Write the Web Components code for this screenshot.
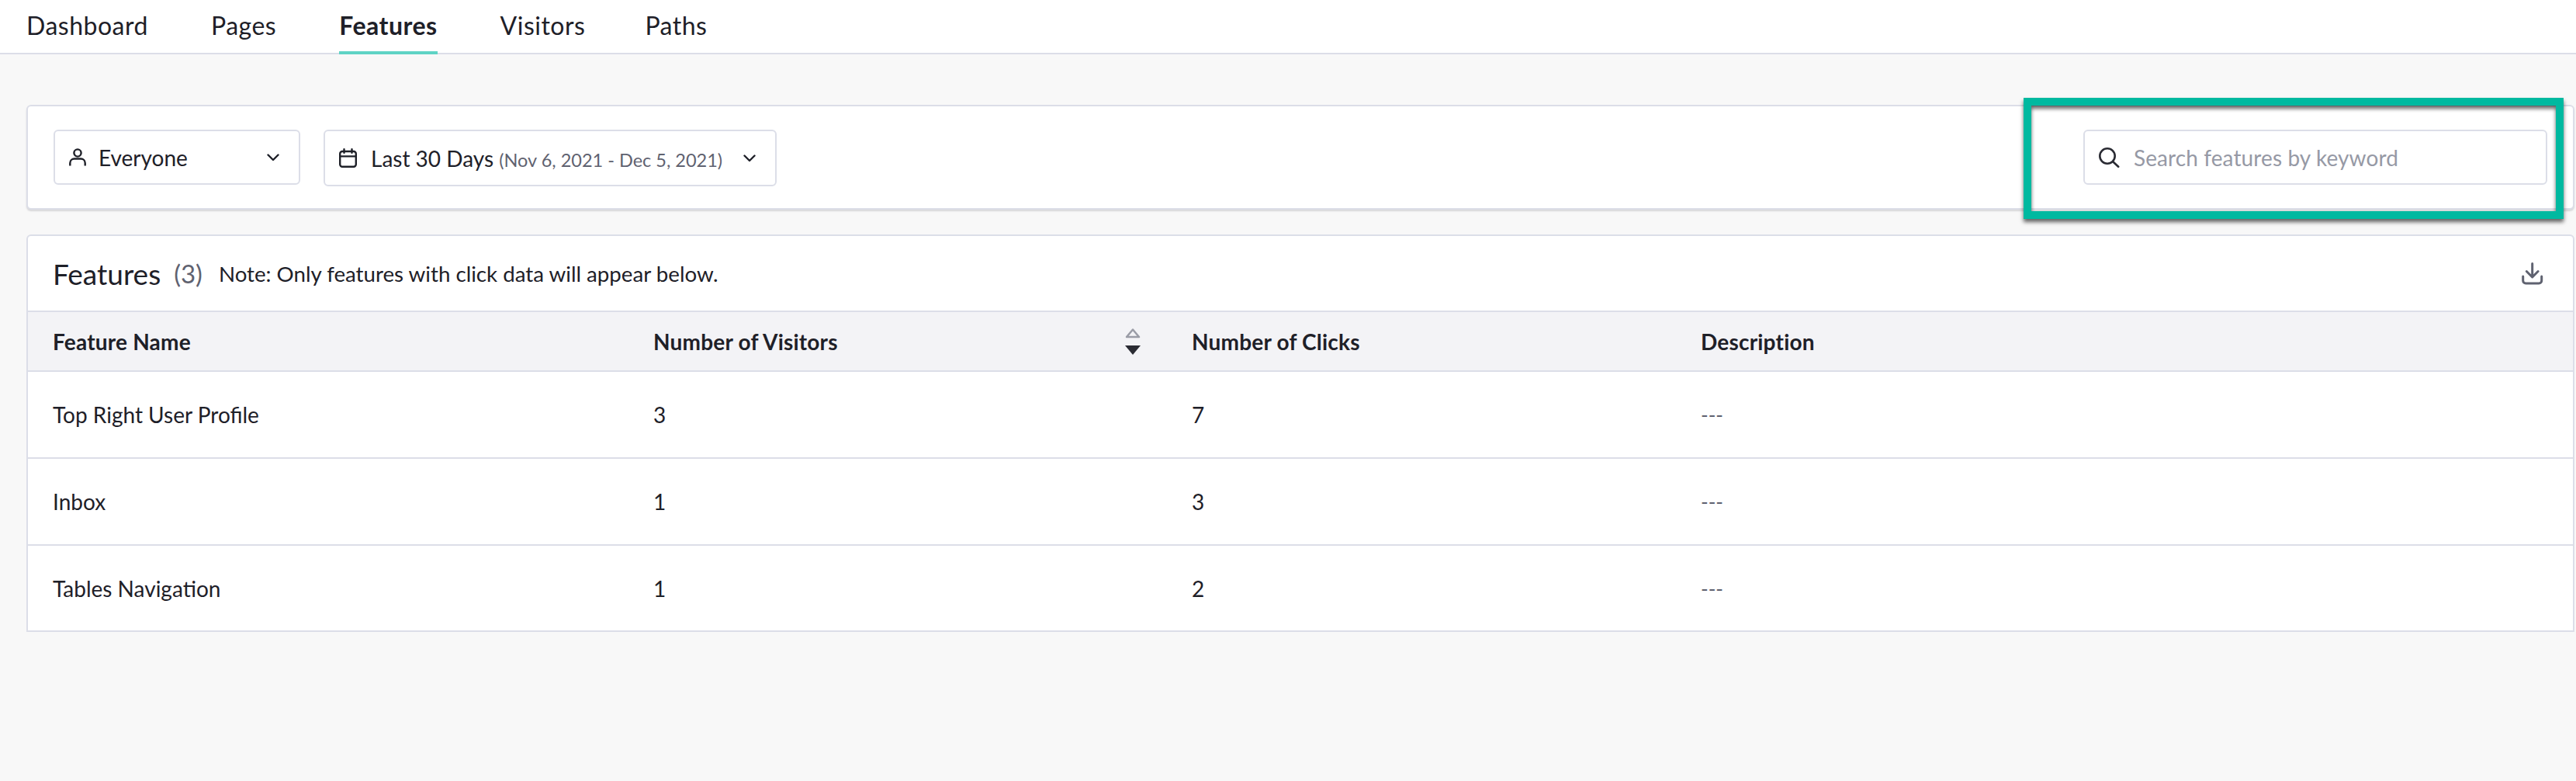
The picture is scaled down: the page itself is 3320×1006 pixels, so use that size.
<!DOCTYPE html>
<html>
<head>
<meta charset="utf-8">
<title>Features</title>
<style>
  html, body { margin: 0; height: 100%; background: #f8f8f8; }
  body { font-family: "Lato", "Liberation Sans", sans-serif; color: #1e2028; }
</style>
</head>
<body>
<app-tabs>
  <tab-link>Dashboard</tab-link>
  <tab-link>Pages</tab-link>
  <tab-link active>Features</tab-link>
  <tab-link>Visitors</tab-link>
  <tab-link>Paths</tab-link>
</app-tabs>
<page-main>
  <filter-bar>
    <filter-select icon="user" width="318">Everyone</filter-select>
    <filter-select icon="calendar" width="584" tall>Last 30 Days <small>(Nov 6, 2021 - Dec 5, 2021)</small></filter-select>
    <search-box slot="right" placeholder="Search features by keyword"></search-box>
  </filter-bar>
  <features-table>
    <span slot="title">Features</span>
    <span slot="count">(3)</span>
    <span slot="note">Note: Only features with click data will appear below.</span>
    <table-row head>
      <span>Feature Name</span>
      <span>Number of Visitors</span>
      <span>Number of Clicks</span>
      <span>Description</span>
    </table-row>
    <table-row>
      <span>Top Right User Profile</span>
      <span>3</span>
      <span>7</span>
      <span class="muted">---</span>
    </table-row>
    <table-row>
      <span>Inbox</span>
      <span>1</span>
      <span>3</span>
      <span class="muted">---</span>
    </table-row>
    <table-row>
      <span>Tables Navigation</span>
      <span>1</span>
      <span>2</span>
      <span class="muted">---</span>
    </table-row>
  </features-table>
</page-main>

<script>
(function initFeaturesPage() {
  const ICONS = {
    user: `<svg width="22" height="23" viewBox="0 0 22 23" fill="none" stroke="#1e2028" stroke-width="2.4"><circle cx="11" cy="6" r="4.600"/><path d="M1.300 22.500V19c0-3.300 2.500-5.500 5.500-5.500h8.400c3 0 5.500 2.200 5.500 5.500v3.500"/></svg>`,
    calendar: `<svg width="23" height="25" viewBox="0 0 23 25" fill="none" stroke="#1e2028" stroke-width="2.4" stroke-linecap="round"><rect x="1.200" y="4" width="20.600" height="19.800" rx="3"/><path d="M1.200 10.400h20.600M6.500 1.200v4.500M16.500 1.200v4.500"/></svg>`,
    chevron: `<svg width="16" height="10" viewBox="0 0 16 10" fill="none" stroke="#1e2028" stroke-width="2.4" stroke-linecap="round" stroke-linejoin="round"><path d="M1.500 1.500L8 8l6.500-6.500"/></svg>`,
    search: `<svg width="27" height="26" viewBox="0 0 27 26" fill="none" stroke="#2a2b33" stroke-width="2.600" stroke-linecap="round"><circle cx="11" cy="11" r="9.700"/><path d="M18.200 18.200l7 6.500"/></svg>`,
    download: `<svg width="28" height="29" viewBox="0 0 28 29" fill="none" stroke="#5f6270" stroke-width="3" stroke-linecap="round" stroke-linejoin="round"><path d="M13.700 1.500V18.500M6.300 11.500l7.400 7.500 7.400-7.500"/><path d="M1.700 18v5.500c0 2 1.500 3.500 3.500 3.500h17c2 0 3.500-1.500 3.500-3.500V18"/></svg>`,
  };

  class AppTabs extends HTMLElement {
    constructor() {
      super();
      this.attachShadow({ mode: "open" });
      this.shadowRoot.innerHTML = `
        <style>
          :host {
            display: flex;
            gap: 81px;
            height: 68px;
            padding-left: 34px;
            background-color: #fff;
            border-bottom: 2px solid #dcdee8;
          }
        </style>
        <slot></slot>
      `;
    }
  }

  class TabLink extends HTMLElement {
    constructor() {
      super();
      this.attachShadow({ mode: "open" });
      this.shadowRoot.innerHTML = `
        <style>
          :host {
            display: block;
            position: relative;
            height: 68px;
            line-height: 66px;
            font-size: 32px;
            letter-spacing: 0.5px;
            color: #1e2028;
          }
          :host(:last-child) {
            margin-left: -4px;
          }
          :host([active]) {
            font-weight: 700;
          }
          :host([active])::after {
            content: "";
            position: absolute;
            left: 0;
            right: 0;
            bottom: -2px;
            height: 4px;
            background-color: #5fd3c5;
          }
        </style>
        <slot></slot>
      `;
    }
  }

  class PageMain extends HTMLElement {
    constructor() {
      super();
      this.attachShadow({ mode: "open" });
      this.shadowRoot.innerHTML = `
        <style>
          :host {
            display: flex;
            flex-direction: column;
            gap: 32px;
            padding: 65px 2px 0 34px;
          }
        </style>
        <slot></slot>
      `;
    }
  }

  class FilterBar extends HTMLElement {
    constructor() {
      super();
      this.attachShadow({ mode: "open" });
      this.shadowRoot.innerHTML = `
        <style>
          :host {
            display: flex;
            align-items: flex-start;
            justify-content: space-between;
            position: relative;
            box-sizing: border-box;
            height: 135px;
            padding: 30px 33px 0 33px;
            background-color: #fff;
            border: 2px solid #dcdee8;
            border-radius: 6px;
            box-shadow: 0 2px 2px rgba(60, 60, 70, 0.18);
          }
          .left {
            display: flex;
            gap: 30px;
          }
          .callout {
            position: absolute;
            top: -11px;
            right: 12px;
            width: 696px;
            height: 156px;
            box-sizing: border-box;
            border: 10px solid #00b9a0;
            box-shadow: 0 4px 5px rgba(0, 0, 0, 0.6), inset 0 4px 5px rgba(0, 0, 0, 0.6);
            pointer-events: none;
          }
        </style>
        <div class="left"><slot></slot></div>
        <slot name="right"></slot>
        <div class="callout"></div>
      `;
    }
  }

  class FilterSelect extends HTMLElement {
    constructor() {
      super();
      this.attachShadow({ mode: "open" });
      const isCalendar = this.getAttribute("icon") === "calendar";
      this.shadowRoot.innerHTML = `
        <style>
          :host {
            display: flex;
            align-items: center;
            box-sizing: border-box;
            width: ${this.getAttribute("width")}px;
            height: ${this.hasAttribute("tall") ? 73 : 71}px;
            padding: 0 25px 0 18px;
            background-color: #fff;
            border: 2px solid #dcdee8;
            border-radius: 6px;
            font-size: 28px;
            white-space: nowrap;
          }
          .icon {
            display: flex;
            margin-right: ${isCalendar ? 18 : 16}px;
          }
          .label {
            flex: 1;
          }
          ::slotted(small) {
            font-size: 23.5px;
            color: #5f6270;
          }
          .chevron {
            display: flex;
          }
        </style>
        <span class="icon">${ICONS[this.getAttribute("icon")]}</span>
        <span class="label"><slot></slot></span>
        <span class="chevron">${ICONS.chevron}</span>
      `;
    }
  }

  class SearchBox extends HTMLElement {
    constructor() {
      super();
      this.attachShadow({ mode: "open" });
      this.shadowRoot.innerHTML = `
        <style>
          :host {
            display: flex;
            align-items: center;
            gap: 18px;
            box-sizing: border-box;
            width: 598px;
            height: 71px;
            padding-left: 18px;
            background-color: #fff;
            border: 2px solid #dcdee8;
            border-radius: 6px;
            font-size: 28px;
            letter-spacing: 0.1px;
            color: #9699a5;
          }
          .icon {
            display: flex;
          }
        </style>
        <span class="icon">${ICONS.search}</span>
        <span>${this.getAttribute("placeholder")}</span>
      `;
    }
  }

  class FeaturesTable extends HTMLElement {
    constructor() {
      super();
      this.attachShadow({ mode: "open" });
      this.shadowRoot.innerHTML = `
        <style>
          :host {
            display: block;
            background-color: #fff;
            border: 2px solid #dcdee8;
            border-radius: 6px 6px 0 0;
          }
          .title-row {
            display: flex;
            align-items: center;
            height: 96px;
            padding: 0 38px 0 32px;
          }
          .title {
            font-size: 37px;
            margin-right: 17px;
          }
          .count {
            font-size: 33px;
            color: #5f6270;
            margin-right: 21px;
          }
          .note {
            flex: 1;
            font-size: 27.7px;
          }
          .download {
            display: flex;
          }
        </style>
        <div class="title-row">
          <span class="title"><slot name="title"></slot></span>
          <span class="count"><slot name="count"></slot></span>
          <span class="note"><slot name="note"></slot></span>
          <span class="download">${ICONS.download}</span>
        </div>
        <slot></slot>
      `;
    }
  }

  class TableRow extends HTMLElement {
    constructor() {
      super();
      this.attachShadow({ mode: "open" });
      this.shadowRoot.innerHTML = `
        <style>
          :host {
            display: grid;
            grid-template-columns: 774px 694px 656px 1fr;
            align-items: center;
            position: relative;
            box-sizing: border-box;
            height: 112px;
            padding-left: 32px;
            border-top: 2px solid #dcdee8;
            font-size: 28px;
            color: #1e2028;
          }
          :host(:last-child) {
            height: 111px;
          }
          :host([head]) {
            height: 77px;
            background-color: #f3f3f6;
            font-weight: 700;
            letter-spacing: 0.2px;
          }
          ::slotted(.muted) {
            font-size: 26px;
            color: #5f6270;
          }
          .sort {
            display: none;
            position: absolute;
            left: 1414px;
            top: 21px;
          }
          :host([head]) .sort {
            display: block;
          }
        </style>
        <slot></slot>
        <svg class="sort" width="20" height="34" viewBox="0 0 20 34">
          <path d="M10 1.500L18 11H2z" fill="none" stroke="#9a9ca6" stroke-width="2.500" stroke-linejoin="round"/>
          <path d="M0 22h20L10 34z" fill="#2a2b33"/>
        </svg>
      `;
    }
  }

  customElements.define("app-tabs", AppTabs);
  customElements.define("tab-link", TabLink);
  customElements.define("page-main", PageMain);
  customElements.define("filter-bar", FilterBar);
  customElements.define("filter-select", FilterSelect);
  customElements.define("search-box", SearchBox);
  customElements.define("features-table", FeaturesTable);
  customElements.define("table-row", TableRow);
})();
</script>
</body>
</html>
